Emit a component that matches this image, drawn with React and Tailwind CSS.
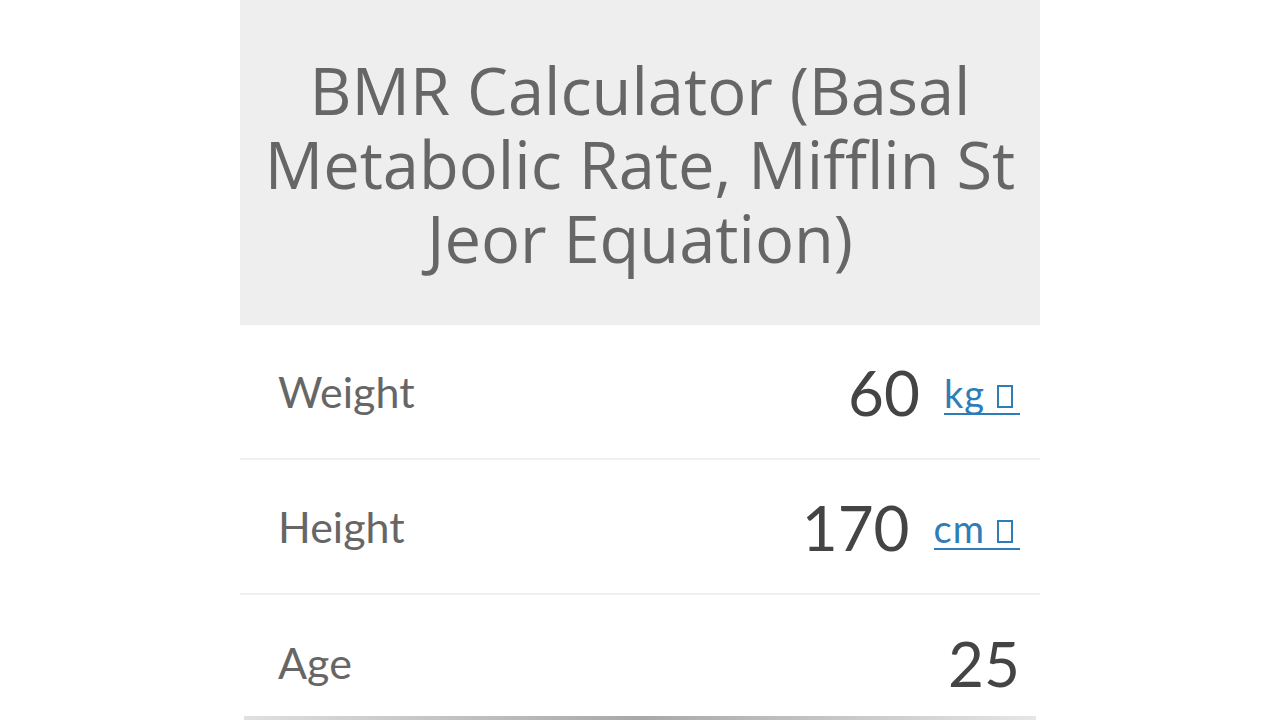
import React from 'react';

const rows = [
  { label: 'Weight', value: '60', unit: 'kg' },
  { label: 'Height', value: '170', unit: 'cm' },
  { label: 'Age', value: '25' },
];

export default function App() {
  return (
    <div className="min-h-screen bg-white flex justify-center">
      <div className="w-[800px] flex flex-col">
        <div className="bg-[#eeeeee] h-[325px] flex items-center justify-center px-4">
          <h1 className="text-center text-[#666666] text-[65px] leading-[74px] font-normal pt-[2px]" style={{ fontFamily: '"Open Sans", sans-serif' }}>
            BMR Calculator (Basal Metabolic Rate, Mifflin St Jeor Equation)
          </h1>
        </div>
        {rows.map((r, i) => {
          const last = i === rows.length - 1;
          return (
            <div
              key={r.label}
              className={`flex items-center justify-between pl-[38px] pr-[20px] ${last ? 'h-[121px] pt-[14px]' : 'h-[135px] border-b-2 border-[#f0f0f0]'}`}
              style={{ fontFamily: 'Lato, sans-serif' }}
            >
              <span className="text-[#666666] text-[43px] pt-[2px]">{r.label}</span>
              <div className="flex items-end gap-[24px]">
                <span className="text-[#444444] text-[62px] leading-none">{r.value}</span>
                {r.unit && (
                  <a href="#" className="mb-[8px] flex items-end gap-[12px] pr-[7px] pb-[1px] border-b-2 border-[#2f7db8] text-[#2f7db8] text-[38px] leading-none tracking-[1px] no-underline">
                    <span>{r.unit}</span>
                    <span className="shrink-0 inline-block w-[16px] h-[23px] mb-[4px] border-2 border-[#2f7db8]"></span>
                  </a>
                )}
              </div>
            </div>
          );
        })}
        <div className="h-[4px] mx-[4px] bg-gradient-to-r from-[#e0e0e0] via-[#a8a8a8] to-[#e6e6e6]" />
      </div>
    </div>
  );
}
